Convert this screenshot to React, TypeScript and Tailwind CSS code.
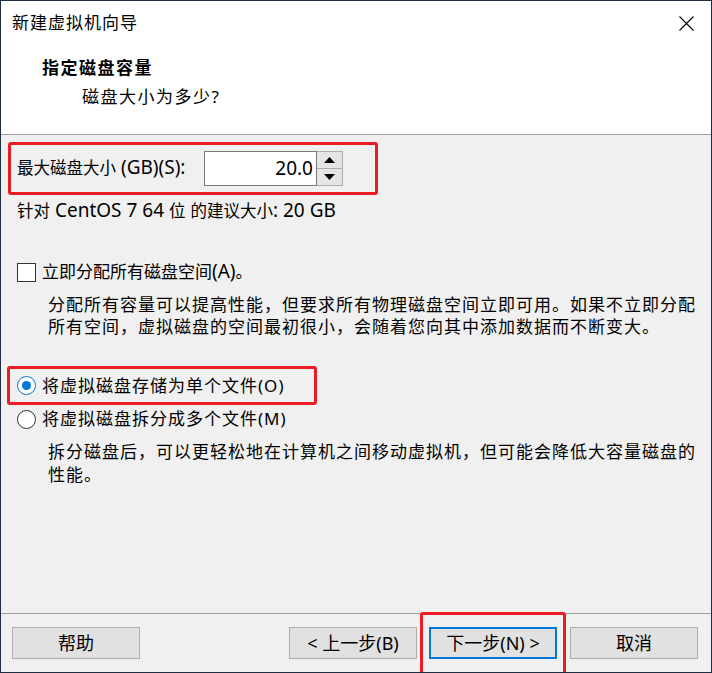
import type { ReactNode } from 'react'

const RED = 'border-[3px] border-[#ed1c24] rounded-[3px]'

// Latin runs render a touch wider than the CJK around them
function L({ children }: { children: ReactNode }) {
  return <span className="text-[19px] leading-none">{children}</span>
}

function WinButton({ children, focused = false }: { children: ReactNode; focused?: boolean }) {
  return (
    <button
      type="button"
      className={
        focused
          ? 'h-[32px] w-[128px] border-2 border-[#0078d7] bg-[#e1e1e1] text-[18px] text-black'
          : 'h-[32px] w-[128px] border border-[#adadad] bg-[#e1e1e1] text-[18px] text-black'
      }
    >
      {children}
    </button>
  )
}

function Radio({ checked }: { checked: boolean }) {
  return (
    <span
      className={
        checked
          ? 'flex h-[19px] w-[19px] items-center justify-center rounded-full border border-[#0078d7] bg-white'
          : 'flex h-[19px] w-[19px] items-center justify-center rounded-full border border-[#333333] bg-white'
      }
    >
      {checked && <span className="h-[9px] w-[9px] rounded-full bg-[#0078d7]" />}
    </span>
  )
}

export default function App() {
  return (
    <div className="relative flex h-[673px] w-[712px] flex-col overflow-hidden border border-[#1e2e40] bg-[#f0f0f0] font-['Noto_Sans','Noto_Sans_CJK_SC',sans-serif] text-black">
      {/* header */}
      <div className="h-[134px] border-b border-[#a0a0a0] bg-white">
        <div className="flex h-[43px] items-center justify-between pl-[11px] pr-[17px]">
          <span className="text-[17px] tracking-[1px]">新建虚拟机向导</span>
          <svg width="15" height="15" viewBox="0 0 15 15" className="mt-[1px]">
            <path d="M0.5 0.5 L14.5 14.5 M14.5 0.5 L0.5 14.5" stroke="#000" strokeWidth="1.1" fill="none" />
          </svg>
        </div>
        <div className="mt-[13px] h-[22px] pl-[41px] text-[17px] font-bold leading-[22px] tracking-[1.5px]">
          指定磁盘容量
        </div>
        <div className="mt-[7px] h-[22px] pl-[81px] text-[17px] leading-[22px] tracking-[1.5px]">
          磁盘大小为多少?
        </div>
      </div>

      {/* body */}
      <div className="flex flex-1 flex-col">
        <div className={`ml-[7px] mt-[7px] flex h-[53px] w-[370px] items-center pl-[6px] ${RED}`}>
          <span className="w-[187px] whitespace-nowrap text-[16.5px]">
            最大磁盘大小<L> (GB)(S):</L>
          </span>
          <div className="flex h-[35px] w-[113px] items-center justify-end border border-[#7a7a7a] bg-white pr-[3px] text-[19px]">
            20.0
          </div>
          <div className="flex h-[35px] w-[26px] flex-col border border-l-0 border-[#adadad] bg-[#f0f0f0]">
            <div className="flex flex-1 items-center justify-center border-b border-[#adadad] bg-[#e5e5e5]">
              <svg width="11" height="6" viewBox="0 0 11 6">
                <path d="M0 6 L5.5 0 L11 6 Z" fill="#000" />
              </svg>
            </div>
            <div className="flex flex-1 items-center justify-center bg-[#e5e5e5]">
              <svg width="11" height="6" viewBox="0 0 11 6">
                <path d="M0 0 L5.5 6 L11 0 Z" fill="#000" />
              </svg>
            </div>
          </div>
        </div>

        <div className="mt-[5px] h-[22px] whitespace-nowrap pl-[16px] text-[16.5px] leading-[22px]">
          针对<L> CentOS 7 64 </L>位<L> </L>的建议大小<L>: 20 GB</L>
        </div>

        <div className="mt-[40px] flex h-[20px] items-center gap-[6px] pl-[16px]">
          <span className="h-[19px] w-[19px] border border-[#333333] bg-white" />
          <span className="whitespace-nowrap text-[17px]">
            立即分配所有磁盘空间<L>(A)</L>。
          </span>
        </div>
        <div className="mt-[12px] pl-[47px] text-[17px] leading-[22px] tracking-[1px]">
          <div className="whitespace-nowrap">分配所有容量可以提高性能，但要求所有物理磁盘空间立即可用。如果不立即分配</div>
          <div className="whitespace-nowrap">所有空间，虚拟磁盘的空间最初很小，会随着您向其中添加数据而不断变大。</div>
        </div>

        <div className={`ml-[6px] mt-[28px] flex h-[39px] w-[310px] items-center gap-[6px] pl-[7px] ${RED}`}>
          <Radio checked />
          <span className="whitespace-nowrap text-[17px] tracking-[1px]">将虚拟磁盘存储为单个文件(O)</span>
        </div>
        <div className="mt-[4px] flex h-[20px] items-center gap-[6px] pl-[16px]">
          <Radio checked={false} />
          <span className="whitespace-nowrap text-[17px] tracking-[1px]">将虚拟磁盘拆分成多个文件(M)</span>
        </div>
        <div className="mt-[11px] pl-[47px] text-[17px] leading-[23px] tracking-[1px]">
          <div className="whitespace-nowrap">拆分磁盘后，可以更轻松地在计算机之间移动虚拟机，但可能会降低大容量磁盘的</div>
          <div className="whitespace-nowrap">性能。</div>
        </div>
      </div>

      {/* footer */}
      <div className="flex h-[59px] border-t border-[#a0a0a0] pl-[11px] pr-[13px] pt-[13px]">
        <WinButton>帮助</WinButton>
        <div className="flex-1" />
        <WinButton>&lt; 上一步(B)</WinButton>
        <div className="ml-[12px]">
          <WinButton focused>下一步(N) &gt;</WinButton>
        </div>
        <div className="ml-[13px]">
          <WinButton>取消</WinButton>
        </div>
      </div>

      {/* annotation overlay */}
      <div className={`absolute left-[419px] top-[611px] h-[70px] w-[146px] ${RED}`} />
    </div>
  )
}
